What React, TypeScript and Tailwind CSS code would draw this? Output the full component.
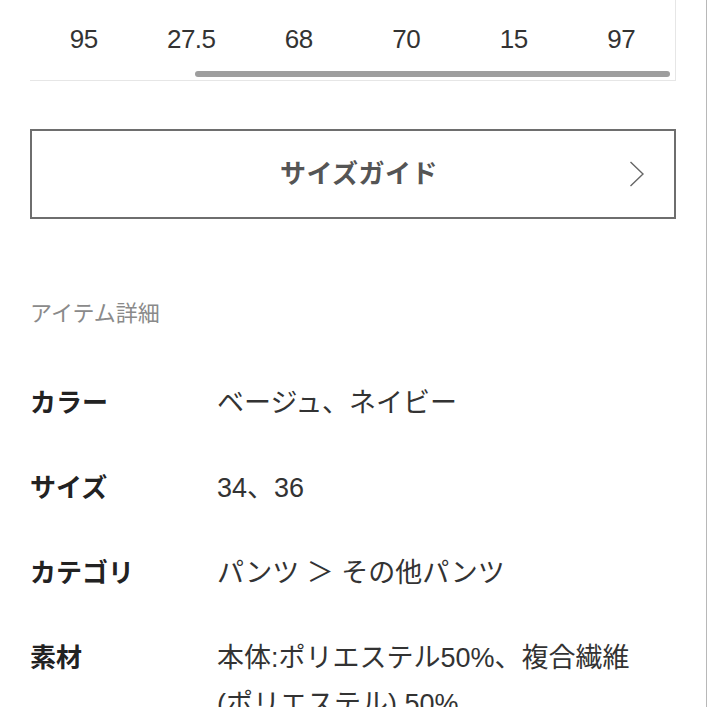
const sizes = ["95", "27.5", "68", "70", "15", "97"];

const details = [
  { label: "カラー", value: ["ベージュ、ネイビー"] },
  { label: "サイズ", value: ["34、36"] },
  { label: "カテゴリ", value: ["パンツ ＞ その他パンツ"] },
  { label: "素材", value: ["本体:ポリエステル50%、複合繊維", "(ポリエステル) 50%"] },
];

export default function App() {
  return (
    <div
      className="h-[707px] w-full overflow-hidden border-r border-[#b8b8b8] bg-white px-[30px] text-[#333]"
      style={{ fontFamily: '"Liberation Sans", "Noto Sans CJK JP", sans-serif' }}
    >
      {/* サイズ表（横スクロール） */}
      <div className="border-b border-r border-[#e6e6e6]">
        <div className="grid grid-cols-6 pt-[24px]">
          {sizes.map((s, i) => (
            <div key={i} className="text-center text-[26px] leading-[30px] tracking-[-0.5px] text-[#333]">
              {s}
            </div>
          ))}
        </div>
        <div className="ml-[165px] mr-[5px] mt-[17px] mb-[3px] h-[6px] rounded-full bg-[#9e9e9e]" />
      </div>

      {/* サイズガイド */}
      <button className="relative mt-[48px] flex h-[90px] w-full items-center justify-center border-2 border-[#6e6e6e] bg-white pl-[12px]">
        <span className="text-[26px] font-bold tracking-[0.5px] text-[#555]">サイズガイド</span>
        <svg
          className="absolute right-[29px] top-1/2 -translate-y-1/2"
          width="16"
          height="26"
          viewBox="0 0 16 26"
          fill="none"
          stroke="#666"
          strokeWidth="1.4"
        >
          <polyline points="1.5,1 14,13 1.5,25" />
        </svg>
      </button>

      {/* アイテム詳細 */}
      <h2 className="mt-[80px] text-[22px] leading-[30px] text-[#8a8a8a]">アイテム詳細</h2>

      <dl className="mt-[51px] flex flex-col gap-[39px]">
        {details.map((d) => (
          <div key={d.label} className="flex">
            <dt className="w-[187px] shrink-0 text-[26px] font-bold leading-[46px] text-[#222]">{d.label}</dt>
            <dd className="flex-1 text-[27px] leading-[46px] text-[#333]">
              {d.value.map((line, i) => (
                <div key={i} className="whitespace-nowrap">{line}</div>
              ))}
            </dd>
          </div>
        ))}
      </dl>
    </div>
  );
}
